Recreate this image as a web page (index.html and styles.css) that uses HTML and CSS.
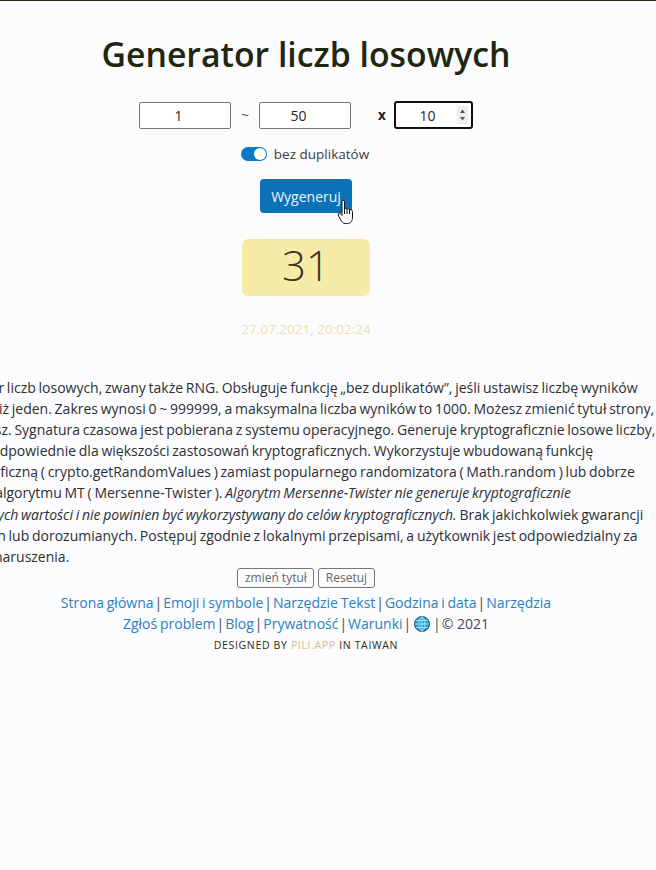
FILE: index.html
```html
<!doctype html>
<html lang="pl">
<head>
    <meta charset="utf-8">
    <title>Generator liczb losowych</title>
    <link rel="stylesheet" href="styles.css">
</head>

<body>
    <main class="page">
        <h1 class="title">Generator liczb losowych</h1>

        <div class="range-row">
            <input class="num-input" type="text" value="1">
            <span class="tilde">~</span>
            <input class="num-input" type="text" value="50">
            <span class="times">x</span>
            <span class="count-box">
                <span class="count-value">10</span>
                <span class="spinner">
                    <svg width="11" height="18" viewBox="0 0 11 18"><path d="M5.500 3.500 8 7H3zM5.500 14.500 3 11H8z" fill="#555"/></svg>
                </span>
            </span>
        </div>

        <div class="switch-row">
            <span class="switch"><span class="knob"></span></span>
            <span>bez duplikatów</span>
        </div>

        <div class="button-wrap">
            <button class="generate">Wygeneruj</button>
            <svg class="hand" width="18" height="26" viewBox="0 0 18 26">
                <path d="M5 2.500C5 1 7.500 1 7.500 2.500V10C7.500 9 10 9 10 10.500 10 9.500 12.500 9.500 12.500 11 12.500 10.500 15.500 10.500 15.500 12.500V18C15.500 21.500 14 24.500 10.500 24.500H8.500C6 24.500 5 23 3.500 20.500L1.200 16C.5 14.500 2.500 13.500 3.500 14.500L5 16.500Z" fill="#fff" stroke="#111" stroke-width="1"/>
                <path d="M7.500 10V15M10 10.500V15M12.500 11V15" stroke="#111" stroke-width="1" fill="none"/>
            </svg>
        </div>

        <div class="result">31</div>
        <p class="timestamp">27.07.2021, 20:02:24</p>

        <p class="description">Generator liczb losowych, zwany także RNG. Obsługuje funkcję „bez duplikatów”, jeśli ustawisz liczbę wyników<br>
        większą niż jeden. Zakres wynosi 0 ~ 999999, a maksymalna liczba wyników to 1000. Możesz zmienić tytuł strony,<br>
        jeśli chcesz. Sygnatura czasowa jest pobierana z systemu operacyjnego. Generuje kryptograficznie losowe liczby,<br>
        które są odpowiednie dla większości zastosowań kryptograficznych. Wykorzystuje wbudowaną funkcję<br>
        kryptograficzną ( crypto.getRandomValues ) zamiast popularnego randomizatora ( Math.random ) lub dobrze<br>
        znanego algorytmu MT ( Mersenne-Twister ). <em>Algorytm Mersenne-Twister nie generuje kryptograficznie<br>
        bezpiecznych wartości i nie powinien być wykorzystywany do celów kryptograficznych.</em> Brak jakichkolwiek gwarancji<br>
        wyraźnych lub dorozumianych. Postępuj zgodnie z lokalnymi przepisami, a użytkownik jest odpowiedzialny za<br>
        wszelkie naruszenia.</p>

        <div class="small-buttons">
            <button class="small-button">zmień tytuł</button>
            <button class="small-button">Resetuj</button>
        </div>

        <p class="links">
            <a href="#">Strona główna</a> | <a href="#">Emoji i symbole</a> | <a href="#">Narzędzie Tekst</a> | <a href="#">Godzina i data</a> | <a href="#">Narzędzia</a>
        </p>
        <p class="links">
            <a href="#">Zgłoś problem</a> | <a href="#">Blog</a> | <a href="#">Prywatność</a> | <a href="#">Warunki</a> |
            <svg class="globe" width="16" height="16" viewBox="0 0 16 16">
                <circle cx="8" cy="8" r="7.500" fill="#2aa3d8" stroke="#15506e" stroke-width="1"/>
                <path d="M.8 8H15.200M2 4.500H14M2 11.500H14M8 .5V15.500M8 .5C4 3 4 13 8 15.500M8 .5C12 3 12 13 8 15.500" stroke="#bfe6f4" stroke-width=".8" fill="none"/>
            </svg>
            | <span class="copyright">© 2021</span>
        </p>
        <p class="credit">Designed by <span class="credit-link">Pili.App</span> in Taiwan</p>
    </main>
</body>
</html>
```

FILE: styles.css
```css
html, body {
    overflow: hidden;
}

body {
    margin: 0;
    height: 870px;
    box-sizing: border-box;
    border-top: 1px solid #2b2b12;
    background-color: #fcfcff;
    color: #212529;
    font-family: "Open Sans", "Noto Sans", Arial, sans-serif;
    font-size: 13.500px;
}

.page {
    width: 612px;
    display: flex;
    flex-direction: column;
    align-items: center;
}

.title {
    margin: 29px 0 0;
    font-size: 33.800px;
    line-height: 48px;
    font-weight: 600;
    color: #22250f;
    white-space: nowrap;
}

.range-row {
    display: flex;
    align-items: center;
    margin-top: 23px;
    height: 28px;
}

.num-input {
    width: 92px;
    height: 27px;
    padding: 0 13px 0 0;
    box-sizing: border-box;
    border: 1px solid #767676;
    border-radius: 2px;
    background: #fff;
    color: #212529;
    font: inherit;
    font-size: 14px;
    text-align: center;
}

.tilde {
    width: 28px;
    text-align: center;
    color: #555;
}

.times {
    width: 16px;
    margin: 0 4px 0 23px;
    text-align: center;
    font-weight: 700;
}

.count-box {
    display: flex;
    align-items: center;
    width: 79px;
    height: 28px;
    box-sizing: border-box;
    border: 2px solid #101010;
    border-radius: 3px;
    background: #fff;
    font-size: 14px;
}

.count-value {
    flex: 1;
    padding-left: 2px;
    text-align: center;
}

.spinner {
    display: flex;
    align-items: center;
    width: 11px;
    height: 18px;
    margin-right: 3px;
    background: #eeeeee;
}

.switch-row {
    display: flex;
    align-items: center;
    gap: 7px;
    margin-top: 15px;
    height: 20px;
    color: #3a3f44;
    position: relative;
    left: -1px;
}

.switch {
    display: flex;
    justify-content: flex-end;
    align-items: center;
    width: 26px;
    height: 14px;
    padding: 0 1px;
    box-sizing: border-box;
    border-radius: 7px;
    background-color: #0d78c8;
}

.knob {
    width: 12px;
    height: 12px;
    border-radius: 50%;
    background: #fff;
}

.button-wrap {
    position: relative;
    margin-top: 15px;
}

.generate {
    display: block;
    width: 92px;
    height: 34px;
    padding: 0;
    border: none;
    border-radius: 4px;
    background-color: #0c72b8;
    color: #e8f6ff;
    font: inherit;
    font-size: 14px;
}

.hand {
    position: absolute;
    left: 77px;
    top: 20px;
}

.result {
    width: 128px;
    height: 57px;
    margin-top: 26px;
    border-radius: 6px;
    background-color: #f6eca8;
    color: #3a3520;
    font-size: 42px;
    font-weight: 300;
    line-height: 52px;
    text-align: center;
}

.timestamp {
    margin: 24px 0 0;
    line-height: 18px;
    color: #e8e4a8;
}

.description {
    margin: 39px 0 0 -63px;
    align-self: flex-start;
    width: 760px;
    font-size: 14px;
    word-spacing: -.9px;
    line-height: 21.100px;
    color: #2c3034;
    white-space: nowrap;
}

.small-buttons {
    display: flex;
    gap: 4px;
    margin-top: 1px;
}

.small-button {
    height: 20px;
    padding: 0 6.500px;
    border: 1px solid #777;
    border-radius: 3px;
    background: transparent;
    color: #666;
    font: inherit;
    font-size: 12px;
}

.links {
    margin: 0;
    font-size: 14px;
    word-spacing: -2.700px;
    line-height: 21px;
    color: #44484c;
}

.small-buttons + .links {
    margin-top: 4px;
}

.links a {
    color: #2c7fbe;
    text-decoration: none;
    word-spacing: -.9px;
}

.copyright {
    word-spacing: normal;
}

.globe {
    margin: 0 2px;
    vertical-align: -3px;
}

.credit {
    margin: 5px 0 0;
    font-size: 10.500px;
    line-height: 13px;
    letter-spacing: .65px;
    text-transform: uppercase;
    color: #2a2a20;
}

.credit-link {
    color: #c8c08a;
}
```
